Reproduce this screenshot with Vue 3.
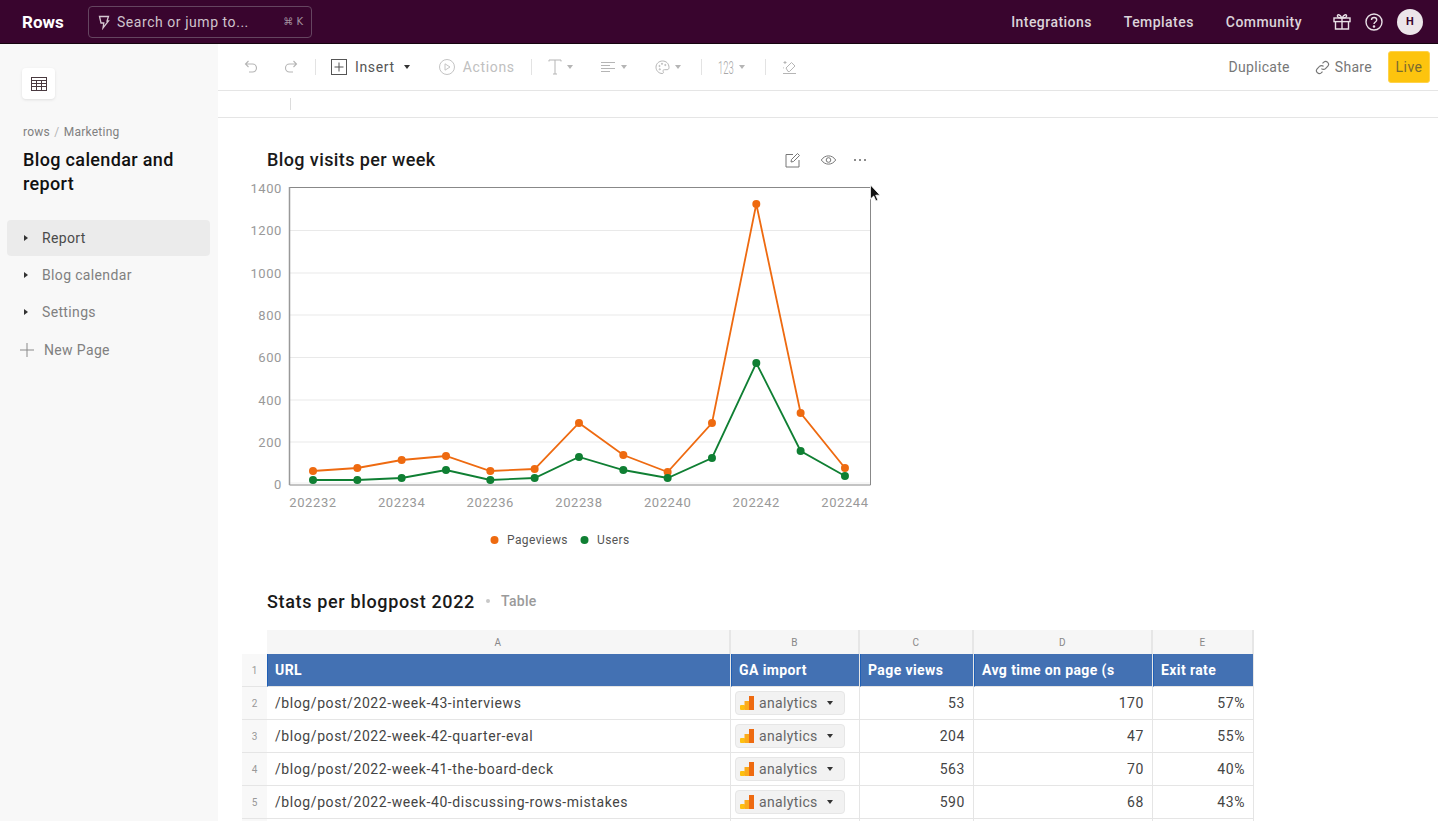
<script setup>
const orangeY = [471, 468, 460, 456, 471, 469, 423, 455, 472, 423, 204, 413, 468]
const greenY = [480, 480, 478, 470, 480, 478, 457, 470, 478, 458, 363, 451, 476]
const px = i => 313 + 44.33 * i
const orange = orangeY.map((y, i) => ({ x: px(i), y }))
const green = greenY.map((y, i) => ({ x: px(i), y }))
const pts = a => a.map(p => `${p.x},${p.y}`).join(' ')
const yTicks = [
  { label: '1400', y: 188 }, { label: '1200', y: 230.5 }, { label: '1000', y: 273 },
  { label: '800', y: 315 }, { label: '600', y: 357.5 }, { label: '400', y: 400 },
  { label: '200', y: 442 }, { label: '0', y: 484.5 }
]
const xTicks = ['202232', '202234', '202236', '202238', '202240', '202242', '202244']
const rows = [
  { n: 2, url: '/blog/post/2022-week-43-interviews', views: 53, time: 170, exit: '57%' },
  { n: 3, url: '/blog/post/2022-week-42-quarter-eval', views: 204, time: 47, exit: '55%' },
  { n: 4, url: '/blog/post/2022-week-41-the-board-deck', views: 563, time: 70, exit: '40%' },
  { n: 5, url: '/blog/post/2022-week-40-discussing-rows-mistakes', views: 590, time: 68, exit: '43%' }
]
const pages = [
  { name: 'Report', active: true },
  { name: 'Blog calendar', active: false },
  { name: 'Settings', active: false }
]
</script>

<template>
  <div class="app">
    <header class="topbar">
      <span class="logo">Rows</span>
      <div class="search">
        <svg class="bolt" width="12" height="16" viewBox="0 0 12 16" fill="none" stroke="#d5c8d2" stroke-width="1.3"><path d="M1.500 2.500h9L9 7h1.500L5 14l.8-5H3z" /></svg>
        <span class="search-text">Search or jump to...</span>
        <span class="search-key">⌘ K</span>
      </div>
      <nav class="topnav">
        <a>Integrations</a>
        <a>Templates</a>
        <a>Community</a>
      </nav>
      <svg class="gift" width="20" height="20" viewBox="0 0 20 20" fill="none" stroke="#e8e0e6" stroke-width="1.4"><rect x="2" y="6" width="16" height="3.6" /><path d="M3.500 9.600v7.400h13V9.600M10 6v11M10 6C8 2 5 2 5.500 4.300 5.800 5.600 8 6 10 6zM10 6c2-4 5-4 4.500-1.700C14.200 5.600 12 6 10 6z" /></svg>
      <svg class="help" width="20" height="20" viewBox="0 0 20 20" fill="none" stroke="#e8e0e6" stroke-width="1.4"><circle cx="10" cy="10" r="8" /><path d="M7.500 8c0-3.300 5.200-3.300 5.200 0 0 2-2.700 2-2.700 4" /><circle cx="10" cy="14.500" r=".6" fill="#e8e0e6" /></svg>
      <span class="avatar">H</span>
    </header>

    <div class="body">
      <aside class="sidebar">
        <div class="sheet-tile">
          <svg width="16" height="14" viewBox="0 0 16 14" fill="none" stroke="#4a3a40" stroke-width="1"><rect x=".5" y=".5" width="15" height="13" /><path d="M.5 3.500h15M.5 6.500h15M.5 9.500h15M5.500 3.500v10M10.500 3.500v10" /></svg>
        </div>
        <div class="crumb">rows <span class="crumb-sep">/</span> Marketing</div>
        <h1 class="doc-title">Blog calendar and report</h1>
        <ul class="pages">
          <li v-for="p in pages" :key="p.name" class="page" :class="{ active: p.active }">
            <span class="tri"></span>{{ p.name }}
          </li>
          <li class="page new-page">
            <svg width="14" height="14" viewBox="0 0 14 14" stroke="#8a8a8a" stroke-width="1"><path d="M7 0v14M0 7h14" /></svg>
            New Page
          </li>
        </ul>
      </aside>

      <main class="main">
        <div class="toolbar">
          <svg class="t-undo" width="14" height="14" viewBox="0 0 14 14" fill="none" stroke="#b5b5b5" stroke-width="1.100"><path d="M4.500 1 1.500 4l3 3M1.500 4h7a3.800 3.800 0 0 1 0 8H5" /></svg>
          <svg class="t-redo" width="14" height="14" viewBox="0 0 14 14" fill="none" stroke="#b5b5b5" stroke-width="1.100"><path d="m9.500 1 3 3-3 3M12.500 4h-7a3.800 3.800 0 0 0 0 8H9" /></svg>
          <span class="sep s1"></span>
          <svg class="t-ins" width="16" height="16" viewBox="0 0 16 16" fill="none" stroke="#555" stroke-width="1"><rect x=".5" y=".5" width="15" height="15" /><path d="M8 3.500v9M3.500 8h9" /></svg>
          <span class="t-label insert">Insert</span>
          <span class="caret dark c-ins"></span>
          <svg class="t-act" width="18" height="18" viewBox="0 0 18 18" fill="none" stroke="#c4c4c4" stroke-width="1"><circle cx="9" cy="9" r="7.500" /><path d="M7 5.800 12 9l-5 3.200z" /></svg>
          <span class="t-label actions">Actions</span>
          <span class="sep s2"></span>
          <svg class="t-text" width="14" height="16" viewBox="0 0 14 16" fill="none" stroke="#b5b5b5" stroke-width="1"><path d="M1 2.500V1h12v1.500M7 1v14M5 15h4" /></svg>
          <span class="caret c-text"></span>
          <svg class="t-align" width="14" height="12" viewBox="0 0 14 12" fill="none" stroke="#b5b5b5" stroke-width="1"><path d="M0 1.500h14M0 4.500h9M0 7.500h14M0 10.500h9" /></svg>
          <span class="caret c-align"></span>
          <svg class="t-pal" width="15" height="15" viewBox="0 0 15 15" fill="none" stroke="#b5b5b5" stroke-width="1"><path d="M7.500 1C3.800 1 1 3.800 1 7.200s2.800 6.300 6.200 6.300c1.300 0 1.500-1 1-1.800-.6-1 0-2 1.200-2H12c1.300 0 2-.9 2-2.200C14 3.600 11.200 1 7.500 1z" /><circle cx="4.500" cy="6" r=".6" /><circle cx="7" cy="3.800" r=".6" /><circle cx="10.300" cy="5" r=".6" /><circle cx="4.800" cy="9.300" r=".6" /></svg>
          <span class="caret c-pal"></span>
          <span class="sep s3"></span>
          <span class="t-fmt">123</span>
          <span class="caret c-frame"></span>
          <span class="sep s4"></span>
          <svg class="t-erase" width="15" height="15" viewBox="0 0 15 15" fill="none" stroke="#b5b5b5" stroke-width="1"><path d="m4 8 5.500-5.500 3.500 3.500-5.500 5.500H6z" /><path d="M1 13.500h13M3 1v3M1.500 2.500h3M1.500 7.500v.8" /></svg>
          <span class="spacer"></span>
          <span class="t-right">Duplicate</span>
          <svg class="t-link" width="15" height="15" viewBox="0 0 14 14" fill="none" stroke="#777" stroke-width="1.100"><path d="M6 8a2.600 2.600 0 0 0 3.800 0l2.200-2.200A2.700 2.700 0 0 0 8.200 2L7 3.200" /><path d="M8 6a2.600 2.600 0 0 0-3.800 0L2 8.200A2.700 2.700 0 0 0 5.800 12L7 10.800" /></svg>
          <span class="t-right share">Share</span>
          <button class="live">Live</button>
        </div>
        <div class="formula"><span class="formula-tick"></span></div>

        <section class="chart-sec">
          <div class="sec-head">
            <h2 class="sec-title">Blog visits per week</h2>
            <div class="sec-icons">
              <svg width="16" height="16" viewBox="0 0 16 16" fill="none" stroke="#777" stroke-width="1"><path d="M8 2.500H1v12.500h13V8" /><path d="m6 10 .5-2.500L12.500 1.500l2 2L8.500 9.500z" /></svg>
              <svg class="eye" width="17" height="12" viewBox="0 0 16 12" fill="none" stroke="#777" stroke-width="1"><path d="M.8 6C4.500.5 11.500.5 15.200 6 11.500 11.500 4.500 11.500.8 6z" /><circle cx="8" cy="6" r="2.300" /></svg>
              <svg class="dots" width="14" height="4" viewBox="0 0 14 4" fill="#666"><circle cx="2" cy="2" r="1" /><circle cx="7" cy="2" r="1" /><circle cx="12" cy="2" r="1" /></svg>
            </div>
          </div>
          <svg class="chart" width="640" height="390" viewBox="242 178 640 390">
            <line v-for="t in yTicks.slice(1, -1)" :key="t.label" x1="290" x2="870" :y1="t.y" :y2="t.y" stroke="#e9e9e9" />
            <line x1="290" x2="870" y1="483" y2="483" stroke="#efefef" />
            <path d="M289.500 485V187.500H870.500V485z" fill="none" stroke="#888" />
            <line x1="289.500" x2="289.500" y1="187" y2="485" stroke="#999" stroke-width="1.500" />
            <text v-for="t in yTicks" :key="'l' + t.label" x="282" :y="t.y + 4.500" text-anchor="end" class="axis">{{ t.label }}</text>
            <text v-for="(t, i) in xTicks" :key="t" :x="px(i * 2)" y="507" text-anchor="middle" class="axis">{{ t }}</text>
            <polyline :points="pts(orange)" fill="none" stroke="#ee6a10" stroke-width="1.800" />
            <circle v-for="(p, i) in orange" :key="'o' + i" :cx="p.x" :cy="p.y" r="4" fill="#ee6a10" />
            <polyline :points="pts(green)" fill="none" stroke="#0f7f33" stroke-width="1.800" />
            <circle v-for="(p, i) in green" :key="'g' + i" :cx="p.x" :cy="p.y" r="4" fill="#0f7f33" />
            <circle cx="494.500" cy="540" r="4" fill="#ee6a10" />
            <text x="507" y="544" class="legend">Pageviews</text>
            <circle cx="584.500" cy="540" r="4" fill="#0f7f33" />
            <text x="597" y="544" class="legend">Users</text>
            <path d="M870.500 185v14l3.200-3 2.200 5 2-1-2.200-4.800h4.300z" fill="#111" stroke="#fff" stroke-width=".8" />
          </svg>
        </section>

        <section class="table-sec">
          <div class="sec-head table-head">
            <h2 class="sec-title">Stats per blogpost 2022</h2>
            <span class="dot"></span>
            <span class="kind">Table</span>
          </div>
          <div class="grid">
            <div class="corner"></div>
            <div class="col">A</div>
            <div class="col">B</div>
            <div class="col">C</div>
            <div class="col">D</div>
            <div class="col">E</div>

            <div class="rowhead hdr">1</div>
            <div class="hcell">URL</div>
            <div class="hcell">GA import</div>
            <div class="hcell">Page views</div>
            <div class="hcell">Avg time on page (s</div>
            <div class="hcell">Exit rate</div>

            <template v-for="r in rows" :key="r.n">
              <div class="rowhead">{{ r.n }}</div>
              <div class="cell">{{ r.url }}</div>
              <div class="cell chip-cell">
                <div class="chip">
                  <svg width="14" height="14" viewBox="0 0 14 14"><rect x="0" y="9" width="5" height="5" rx="1" fill="#fdc010" /><rect x="4.500" y="5" width="5" height="9" fill="#fbab1c" /><rect x="9" y="0" width="5" height="14" fill="#ee6a10" /></svg>
                  <span class="chip-text">analytics</span>
                  <span class="caret dark chip-caret"></span>
                </div>
              </div>
              <div class="cell num">{{ r.views }}</div>
              <div class="cell num">{{ r.time }}</div>
              <div class="cell num">{{ r.exit }}</div>
            </template>
            <div class="rowhead"></div>
            <div class="cell"></div>
            <div class="cell"></div>
            <div class="cell"></div>
            <div class="cell"></div>
            <div class="cell"></div>
          </div>
        </section>
      </main>
    </div>
  </div>
</template>

<style>
html, body { margin: 0; height: 100%; overflow: hidden; background: #fff; }
</style>

<style scoped>
.app {
  height: 821px;
  overflow: hidden;
  display: flex;
  flex-direction: column;
  font-family: Roboto, "Noto Sans", sans-serif;
  color: #333;
}
.topbar {
  height: 43px;
  flex: none;
  background: #39052e;
  border-bottom: 1px solid #16040f;
  display: flex;
  align-items: center;
  padding: 0 15px 0 22px;
  box-sizing: content-box;
}
.logo { color: #fff; font-weight: 700; font-size: 17px; width: 66px; }
.search {
  width: 224px;
  height: 32px;
  box-sizing: border-box;
  border: 1px solid #654560;
  border-radius: 4px;
  display: flex;
  align-items: center;
  padding: 0 8px 0 9px;
  color: #cfc3cc;
}
.search-text { margin-left: 7px; font-size: 14px; letter-spacing: 0.55px; flex: 1; }
.search-key { font-size: 10px; color: #a493a0; font-family: "DejaVu Sans", sans-serif; }
.topnav { margin-left: auto; display: flex; gap: 32px; }
.topnav a { color: #dcd4da; font-size: 14px; font-weight: 500; letter-spacing: 0.45px; }
.gift { margin-left: 30px; }
.help { margin-left: 12px; }
.avatar {
  margin-left: 13px;
  width: 26px;
  height: 26px;
  border-radius: 50%;
  background: #ece6ea;
  color: #39052e;
  font-size: 11px;
  font-weight: 700;
  display: flex;
  align-items: center;
  justify-content: center;
}
.body { flex: 1; display: flex; min-height: 0; }
.sidebar {
  width: 218px;
  flex: none;
  background: #f8f8f8;
  padding: 24px 8px 0 7px;
  box-sizing: border-box;
}
.sheet-tile {
  margin-left: 15px;
  width: 33px;
  height: 31px;
  background: #fff;
  border-radius: 4px;
  box-shadow: 0 1px 3px rgba(0, 0, 0, 0.1);
  display: flex;
  align-items: center;
  justify-content: center;
}
.crumb { margin: 25px 0 0 16px; font-size: 12px; line-height: 16px; color: #808080; letter-spacing: 0.25px; }
.crumb-sep { color: #b5b5b5; margin: 0 1px; }
.doc-title {
  margin: 8px 16px 0;
  font-size: 18px;
  line-height: 24px;
  font-weight: 500;
  letter-spacing: 0.35px;
  color: #111;
}
.pages { list-style: none; margin: 24px 0 0; padding: 0; }
.page {
  height: 36px;
  margin-bottom: 1px;
  padding-left: 17px;
  border-radius: 4px;
  display: flex;
  align-items: center;
  font-size: 14px;
  color: #808080;
  letter-spacing: 0.35px;
}
.page.active { background: #ebebeb; color: #4a4a4a; }
.tri {
  width: 0;
  height: 0;
  border-left: 4px solid #333;
  border-top: 3px solid transparent;
  border-bottom: 3px solid transparent;
  margin-right: 14px;
}
.new-page { padding-left: 13px; gap: 10px; margin-top: 2px; }
.main { flex: 1; min-width: 0; background: #fff; }
.toolbar {
  height: 47px;
  box-sizing: border-box;
  border-bottom: 1px solid #e5e5e5;
  display: flex;
  align-items: center;
  padding: 0 8px 0 26px;
}
.t-redo { margin-left: 26px; }
.sep { width: 1px; height: 16px; background: #e3e3e3; }
.s1 { margin-left: 17px; }
.t-ins { margin-left: 15px; }
.t-label { font-size: 14px; letter-spacing: 0.65px; }
.insert { margin-left: 8px; color: #555; }
.caret {
  width: 0;
  height: 0;
  border-top: 4px solid #b5b5b5;
  border-left: 3.5px solid transparent;
  border-right: 3.5px solid transparent;
}
.caret.dark { border-top-color: #333; }
.c-ins { margin-left: 9px; }
.t-act { margin-left: 28px; }
.actions { margin-left: 7px; color: #c0c0c0; }
.s2 { margin-left: 16px; }
.t-text { margin-left: 16px; }
.c-text { margin-left: 5px; }
.t-align { margin-left: 28px; }
.c-align { margin-left: 6px; }
.t-pal { margin-left: 28px; }
.c-pal { margin-left: 5px; }
.s3 { margin-left: 20px; }
.t-fmt {
  margin-left: 16px;
  width: 14px;
  font-size: 19px;
  font-weight: 300;
  color: #a8a8a8;
  white-space: nowrap;
  transform: scaleX(0.5);
  transform-origin: left center;
}
.c-frame { margin-left: 7px; }
.s4 { margin-left: 20px; }
.t-erase { margin-left: 16px; }
.spacer { flex: 1; }
.t-right { font-size: 14px; color: #777; letter-spacing: 0.3px; }
.t-link { margin-left: 25px; }
.share { margin-left: 5px; }
.live {
  margin-left: 16px;
  width: 42px;
  height: 32px;
  border: 1px solid #ffd24a;
  border-radius: 3px;
  background: #fdc40e;
  color: #7a6a30;
  font: inherit;
  font-size: 14px;
  letter-spacing: 0.5px;
  padding: 0;
}
.formula {
  height: 27px;
  box-sizing: border-box;
  border-bottom: 1px solid #e5e5e5;
  padding: 7px 0 0 72px;
}
.formula-tick { display: block; width: 1px; height: 12px; background: #dcdcdc; }
.chart-sec { padding: 30px 0 0 24px; }
.sec-head { display: flex; align-items: center; height: 24px; }
.chart-sec .sec-head { width: 600px; margin-left: 25px; }
.chart-sec .sec-title { margin-bottom: 2px; }
.sec-title { margin: 0; font-size: 18px; font-weight: 500; letter-spacing: 0.4px; color: #1a1a1a; }
.table-head .sec-title { letter-spacing: 0.65px; }
.sec-icons { margin-left: auto; display: flex; align-items: center; gap: 19px; }
.dots { margin-left: -3px; }
.chart { display: block; margin-top: 6px; }
.axis { font-size: 13px; fill: #999; letter-spacing: 0.6px; }
.legend { font-size: 12px; fill: #555; letter-spacing: 0.4px; }
.table-sec { padding: 21px 0 0 24px; }
.table-head { margin-left: 25px; }
.dot { width: 4px; height: 4px; border-radius: 50%; background: #c8c8c8; margin-left: 11px; }
.kind { margin-left: 11px; font-size: 14px; font-weight: 500; letter-spacing: 0.3px; color: #9a9a9a; }
.grid {
  margin-top: 17px;
  display: grid;
  width: 1012px;
  grid-template-columns: 25px 464px 129px 114px 179px 101px;
  grid-template-rows: 24px 33px repeat(5, 33px);
}
.corner { background: #fff; }
.col {
  background: #f6f6f6;
  border-right: 2px solid #e6e6e6;
  font-size: 10px;
  color: #888;
  letter-spacing: 0.3px;
  display: flex;
  align-items: center;
  justify-content: center;
}
.rowhead {
  background: #f8f8f8;
  border-bottom: 1px solid #e5e5e5;
  font-size: 10px;
  color: #999;
  display: flex;
  align-items: center;
  justify-content: center;
}
.hcell {
  background: #4371b3;
  border-left: 1px solid #1f5fb5;
  border-right: 1px solid #e6e6e6;
  border-bottom: 1px solid #e5e5e5;
  color: #fff;
  font-size: 14px;
  font-weight: 700;
  letter-spacing: 0.4px;
  display: flex;
  align-items: center;
  padding-left: 7px;
  box-sizing: border-box;
  white-space: nowrap;
  overflow: hidden;
}
.cell {
  border-right: 1px solid #e5e5e5;
  border-bottom: 1px solid #e5e5e5;
  font-size: 14px;
  color: #444;
  letter-spacing: 0.58px;
  display: flex;
  align-items: center;
  padding: 0 8px;
  box-sizing: border-box;
  white-space: nowrap;
}
.num { justify-content: flex-end; }
.chip-cell { padding: 0 4px; }
.chip {
  width: 110px;
  height: 24px;
  box-sizing: border-box;
  background: #f2f2f2;
  border: 1px solid #e6e6e6;
  border-radius: 4px;
  display: flex;
  align-items: center;
  padding-left: 4px;
}
.chip-text { margin-left: 5px; color: #666; letter-spacing: 0.35px; }
.chip-caret { margin-left: 9px; }
</style>
